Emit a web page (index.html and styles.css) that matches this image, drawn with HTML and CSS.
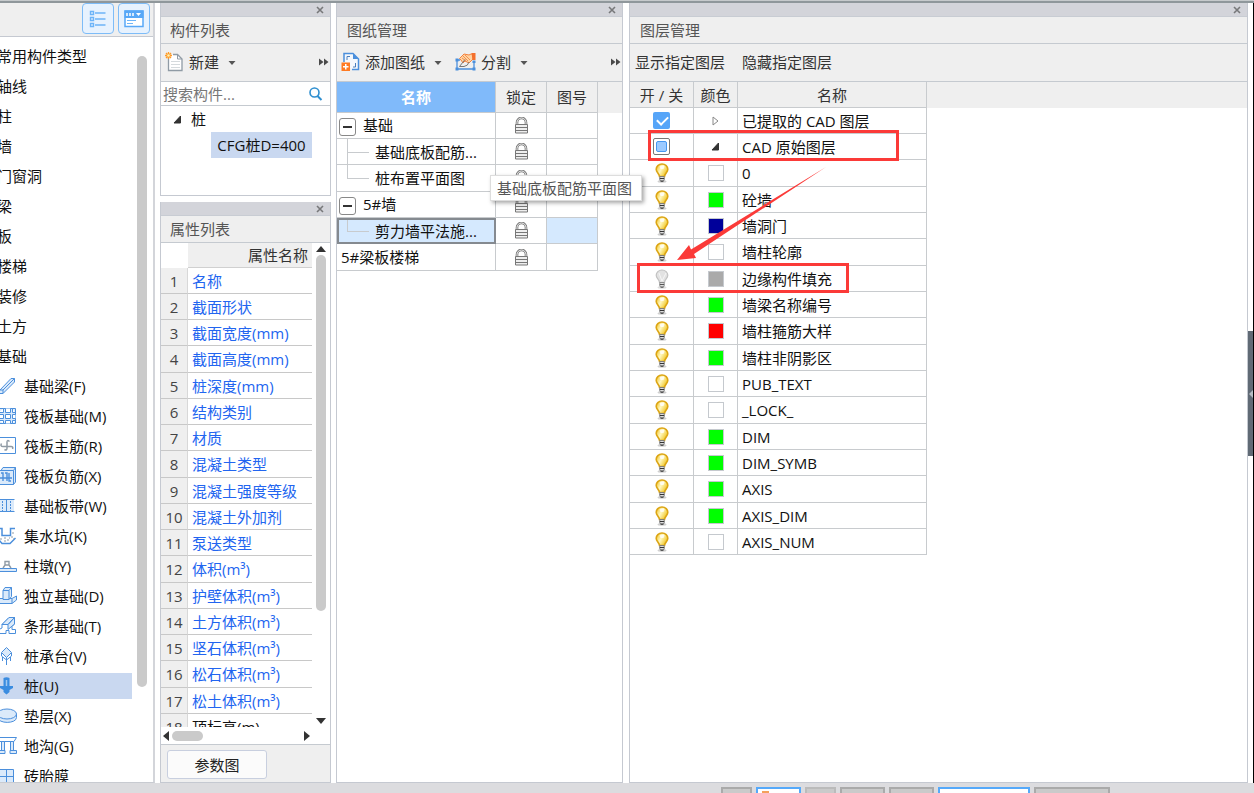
FILE: index.html
```html
<!DOCTYPE html>
<html lang="zh-CN">
<head>
<meta charset="utf-8">
<title>图层管理</title>
<link rel="stylesheet" href="styles.css">
</head>
<body>
<svg class="defs" aria-hidden="true">
  <defs>
    <linearGradient id="glow" x1="0" y1="0" x2="1" y2="0.6"><stop offset="0" stop-color="#f0bc10"/><stop offset="0.5" stop-color="#fff8c0"/><stop offset="1" stop-color="#f0c41e"/></linearGradient>
    <symbol id="bulb" viewBox="0 0 14 20">
      <ellipse cx="7" cy="18.5" rx="4.5" ry="1.2" fill="#d0d0d0"/>
      <path d="M7 1C3.6 1 1.2 3.4 1.2 6.3C1.2 9.3 4.3 10.5 4.5 13.5H9.5C9.7 10.5 12.800 9.3 12.8 6.3C12.8 3.4 10.4 1 7 1Z" fill="url(#glow)" stroke="#dca514" stroke-width="1.6"/>
      <path d="M4.5 3.500Q7 1.700 9.500 3.500L8.500 6H5.500Z" fill="#fff" opacity=".8"/>
      <path d="M4.800 13.500H9.200V17L8 18.500H6L4.800 17Z" fill="#ddd" stroke="#777" stroke-width="0.9"/>
      <path d="M4.800 15.500H9.200M5.500 18H8.500" stroke="#333"/>
    </symbol>
    <symbol id="bulb-off" viewBox="0 0 14 20">
      <ellipse cx="7" cy="18.5" rx="4.5" ry="1.2" fill="#ddd"/>
      <path d="M7 1C3.6 1 1.2 3.4 1.2 6.3C1.2 9.3 4.3 10.5 4.5 13.5H9.5C9.7 10.5 12.8 9.3 12.8 6.3C12.8 3.4 10.4 1 7 1Z" fill="#e2e2e2" stroke="#c2c2c2" stroke-width="1.2"/>
      <path d="M4 4L7 12L11 4" fill="none" stroke="#f6f6f6"/>
      <path d="M4.8 13.5H9.2V17L8 18.5H6L4.8 17Z" fill="#ddd" stroke="#888" stroke-width="0.9"/>
      <path d="M4.8 15.5H9.2M5.5 18H8.5" stroke="#555"/>
    </symbol>
    <symbol id="lock" viewBox="0 0 15 17">
      <path d="M3 8V5.5a4.500 4.500 0 0 1 9 0V8" fill="none" stroke="#777" stroke-width="2.6"/>
      <path d="M3 8V5.5a4.500 4.500 0 0 1 9 0V8" fill="none" stroke="#eee"/>
      <path d="M1.5 7.5H13.5V16H1.500Z" fill="#eee" stroke="#777"/>
      <path d="M1.5 10.500H13.5M1.500 13.500H13.500" stroke="#777"/>
    </symbol>
    <symbol id="close" viewBox="0 0 8 8"><path d="M1 1L7 7M7 1L1 7" stroke="#77787a" stroke-width="1.6"/></symbol>
    <symbol id="more" viewBox="0 0 10 8"><path d="M0 0.5L4.5 4L0 7.5ZM5 0.5L9.5 4L5 7.5Z" fill="#4a4a4a"/></symbol>
    <symbol id="caret" viewBox="0 0 8 4"><path d="M0.5 0H7.5L4 4Z" fill="#555"/></symbol>
    <symbol id="expanded" viewBox="0 0 9 9"><path d="M7.500 1V8H1Z" fill="#333" stroke="#333"/></symbol>
  </defs>
</svg>

<main class="workspace">
  <nav class="types">
    <div class="types-bar">
      <button class="view-btn" aria-label="列表视图">
        <svg width="18" height="18" viewBox="0 0 18 18" fill="none" stroke="#6db4f8" stroke-width="1.4"><path d="M1.500 1.500H4.500V4.500H1.500ZM1.500 7.500H4.500V10.500H1.500ZM1.500 13.500H4.500V16.500H1.500ZM6 3H16.500M6 9H16.500M6 15H16.500"/></svg>
      </button>
      <button class="view-btn" aria-label="窗口视图">
        <svg width="20" height="18" viewBox="0 0 20 18"><path d="M1 1H19V16.5H1Z" fill="#fff" stroke="#58a8f7" stroke-width="1.5"/><path d="M0.5 0.5H19.5V8H0.5Z" fill="#58a8f7"/><path d="M3 3V6M6 3V6M9 3V6" stroke="#fff" stroke-width="1.5"/><path d="M12 3H17L14.5 6Z" fill="#fff"/><path d="M3 10.5H12M3 13.5H9" stroke="#6db4f8" stroke-width="1.2"/></svg>
      </button>
    </div>
    <div class="types-body">
      <ul class="types-list">
        <li class="group">常用构件类型</li>
        <li class="group">轴线</li>
        <li class="group">柱</li>
        <li class="group">墙</li>
        <li class="group">门窗洞</li>
        <li class="group">梁</li>
        <li class="group">板</li>
        <li class="group">楼梯</li>
        <li class="group">装修</li>
        <li class="group">土方</li>
        <li class="group">基础</li>
        <li><svg class="type-icon" viewBox="0 0 17 18"><path d="M0 13L11 1.500H14.500V5L3 16.500H0M0 13H3V16.500M3 13L14.500 1.500" class="shape"/></svg>基础梁(F)</li>
        <li><svg class="type-icon" viewBox="0 0 17 18"><path d="M-2 1.500H15.500V16.500H-2Z" class="shape"/><path d="M-1 5.500H3.500V1.500M5.500 1.500V5.500H10.500V1.500M15 5.500H12.500V1.500M-1 7.500H3.500V11.500H-1M5.500 7.500H10.500V11.500H5.500ZM15.500 7.500H12.500V11.500H15.500M-1 13.500H3.500V16.500M5.500 16.500V13.500H10.500V16.500M12.500 16.500V13.500H15.500" class="shape plain"/></svg>筏板基础(M)</li>
        <li><svg class="type-icon" viewBox="0 0 17 18"><path d="M-2 0.500H15.500V16.500H-2Z" class="shape plain"/><path d="M9.500 4.500Q7 2.500 7 5V11Q7 14 4.500 12.500M1.500 6.500Q0 9.500 3 9.500H11Q13.500 9.500 12.500 12" class="steel" stroke-width="1.500"/></svg>筏板主筋(R)</li>
        <li><svg class="type-icon" viewBox="0 0 17 18"><path d="M-2 3.500H13.500V17.500H-2ZM1 3.500L3 0.500H15.500V15L13.500 17.500M13.500 3.500L15.500 0.500" class="shape"/><path d="M-1 11H12M1 6H3V14M5 6H7V14M9 6V14H11" class="line" stroke-width="1.400"/></svg>筏板负筋(X)</li>
        <li><svg class="type-icon" viewBox="0 0 17 18"><path d="M-2 3H14V15H-2Z" fill="#dbeafa"/><path d="M0 2.500H14.500M0 14.500H14.500M6.500 3V15" class="line"/><path d="M2.500 4V14M10.500 4V14" class="line" stroke-dasharray="2 1"/></svg>基础板带(W)</li>
        <li><svg class="type-icon" viewBox="0 0 17 18"><path d="M-1 1.500H2V8.500H10.500V1.500H15M15.500 11L10 16.500H2L-1 13" class="line" stroke-width="1.500"/><path d="M0 12H2M4 11H6M7 13H9M11 10H13M13 5V7M4 14H6M9 11H10M13 12H14" class="steel"/></svg>集水坑(K)</li>
        <li><svg class="type-icon" viewBox="0 0 17 18"><path d="M-1 11.500H16.500V14.500H-1Z" class="shape"/><path d="M3 11L5 8H9L11 11M5 8V4.500H9V8" class="steel" stroke-width="1.400"/></svg>柱墩(Y)</li>
        <li><svg class="type-icon" viewBox="0 0 17 18"><path d="M-1 11.500H12L16.500 9V13L12 16.500H-1Z" class="shape"/><path d="M3 12.500V3.500L5 0.500H11.500V9.500L9 12.500Z" class="shape"/><path d="M9 12.500V3.500L11.500 0.500M3 3.500H9M12 12V16.500" class="line"/></svg>独立基础(D)</li>
        <li><svg class="type-icon" viewBox="0 0 17 18"><path d="M-1 12.500L2 11V7.500L9 0.500H14.500V7L12 9.500V12.500H15.500V16.500H9V13.500L6 13.500V16.500H-1Z" class="shape plain"/><path d="M2 7.500L9 0.500H14.500L8 7.500ZM8 7.500L14.500 0.500V7L8 12.500Z" class="shape"/></svg>条形基础(T)</li>
        <li><svg class="type-icon" viewBox="0 0 17 18"><path d="M6.500 0.500L11.500 5.500L6.500 10.500L1.500 5.500Z" class="shape"/><path d="M1.500 6V9L6.500 13L11.500 9V6M2.500 10V14M6.500 10.500V18M10.500 10V14" class="line"/></svg>桩承台(V)</li>
        <li class="current"><svg class="type-icon" viewBox="0 0 17 18"><path d="M3.500 1Q6.500 -0.500 9.500 1V9H13V11L9.500 13V15L6.500 17.500L3.500 15V13L0 11V9H3.500Z" fill="#3a8ce0"/><path d="M6.500 3V9" stroke="#9fc8f2" stroke-width="1.500"/></svg>桩(U)</li>
        <li><svg class="type-icon" viewBox="0 0 17 18"><path d="M-2 7V10.500C-2 17 16.500 17 16.500 10.500V7Z" class="shape"/><ellipse cx="7" cy="7" rx="9.500" ry="5" class="shape"/></svg>垫层(X)</li>
        <li><svg class="type-icon" viewBox="0 0 17 18"><path d="M-1 0.500H16.500L14 4.500H-1Z" class="shape plain"/><path d="M1.500 4.500H4.500V13.500H1.500ZM10.500 4.500H13.500V13.500H10.500ZM-1 13.500H5V16.500H-1M10 13.500H16.500V16.500H10Z" class="shape"/></svg>地沟(G)</li>
        <li><svg class="type-icon" viewBox="0 0 17 18"><path d="M-2 2.500H13.500V18H-2ZM6.500 2.500V18M-2 9.500H13.500" class="shape"/></svg>砖胎膜</li>
      </ul>
      <div class="rail"><div class="thumb types-thumb"></div></div>
    </div>
  </nav>

  <div class="column">
    <section class="panel">
      <div class="strip"><button class="close" aria-label="关闭"><svg width="8" height="8"><use href="#close"/></svg></button></div>
      <h2 class="title">构件列表</h2>
      <div class="toolbar">
        <button class="tool">
          <svg width="19" height="20" viewBox="0 0 19 20"><path d="M3.500 4V18.500H17V7L12.500 2.500H8" fill="#fff" stroke="#909ba5" stroke-width="1.300"/><path d="M12.500 2.500V7H17" fill="none" stroke="#909ba5"/><path d="M6 9.500H15M6 12.500H15M6 15.500H15" stroke="#d5dadd"/><path d="M1 1L6 6M6 1L1 6M3.500 0V7M0 3.500H7" stroke="#ff9b28" stroke-width="1.300"/><circle cx="3.500" cy="3.500" r="1.300" fill="#fff3b0"/></svg>
          新建<svg class="caret" width="8" height="4"><use href="#caret"/></svg>
        </button>
        <button class="more" aria-label="更多"><svg width="10" height="8"><use href="#more"/></svg></button>
      </div>
      <label class="search">
        <input type="text" placeholder="搜索构件..." aria-label="搜索构件">
        <svg width="14" height="14" viewBox="0 0 14 14"><circle cx="5.500" cy="5.500" r="4.500" fill="none" stroke="#2f8fd0" stroke-width="1.600"/><path d="M8.500 9L12.500 13" stroke="#2f8fd0" stroke-width="2"/></svg>
      </label>
      <div class="tree">
        <div class="tree-root"><svg width="9" height="9"><use href="#expanded"/></svg>桩</div>
        <div class="tree-leaf">CFG桩D=400</div>
      </div>
    </section>

    <section class="panel grow">
      <div class="strip"><button class="close" aria-label="关闭"><svg width="8" height="8"><use href="#close"/></svg></button></div>
      <h2 class="title">属性列表</h2>
      <div class="props">
        <div class="props-clip">
          <table class="props-table">
            <thead><tr><th class="corner"></th><th>属性名称</th></tr></thead>
            <tbody>
              <tr><td>1</td><td>名称</td></tr>
              <tr><td>2</td><td>截面形状</td></tr>
              <tr><td>3</td><td>截面宽度(mm)</td></tr>
              <tr><td>4</td><td>截面高度(mm)</td></tr>
              <tr><td>5</td><td>桩深度(mm)</td></tr>
              <tr><td>6</td><td>结构类别</td></tr>
              <tr><td>7</td><td>材质</td></tr>
              <tr><td>8</td><td>混凝土类型</td></tr>
              <tr><td>9</td><td>混凝土强度等级</td></tr>
              <tr><td>10</td><td>混凝土外加剂</td></tr>
              <tr><td>11</td><td>泵送类型</td></tr>
              <tr><td>12</td><td>体积(m³)</td></tr>
              <tr><td>13</td><td>护壁体积(m³)</td></tr>
              <tr><td>14</td><td>土方体积(m³)</td></tr>
              <tr><td>15</td><td>坚石体积(m³)</td></tr>
              <tr><td>16</td><td>松石体积(m³)</td></tr>
              <tr><td>17</td><td>松土体积(m³)</td></tr>
              <tr><td>18</td><td class="own">顶标高(m)</td></tr>
            </tbody>
          </table>
        </div>
        <div class="v-scroll">
          <svg width="10" height="6" viewBox="0 0 10 6"><path d="M0 6L5 0L10 6Z" fill="#333"/></svg>
          <div class="thumb props-thumb"></div>
          <svg class="down" width="10" height="6" viewBox="0 0 10 6"><path d="M0 0H10L5 6Z" fill="#333"/></svg>
        </div>
      </div>
      <div class="h-scroll">
        <svg width="6" height="10" viewBox="0 0 6 10"><path d="M6 0V10L0 5Z" fill="#333"/></svg>
        <div class="thumb h-thumb"></div>
        <svg class="right" width="6" height="10" viewBox="0 0 6 10"><path d="M0 0L6 5L0 10Z" fill="#333"/></svg>
      </div>
      <div class="actions"><button class="param">参数图</button></div>
    </section>
  </div>

  <section class="panel drawings">
    <div class="strip"><button class="close" aria-label="关闭"><svg width="8" height="8"><use href="#close"/></svg></button></div>
    <h2 class="title">图纸管理</h2>
    <div class="toolbar">
      <button class="tool">
        <svg width="19" height="20" viewBox="0 0 19 20"><path d="M3 10V1.500H12L17.500 7V17.500H11" fill="#f4f8fd" stroke="#4b8fdc" stroke-width="1.500"/><path d="M12 1.500V7H17.500Z" fill="#4b8fdc"/><path d="M6 8V4.500H9M14.500 11V15H12" fill="none" stroke="#4b7ebc"/><path d="M0.500 10.500H9V19H0.500Z" fill="#ff7a22"/><path d="M4.750 12V17.500M2 14.750H7.500" stroke="#fff" stroke-width="1.500"/></svg>
        添加图纸<svg class="caret" width="8" height="4"><use href="#caret"/></svg>
      </button>
      <button class="tool">
        <svg width="21" height="20" viewBox="0 0 21 20"><path d="M2 8V17H19V10M2 8H5" fill="none" stroke="#4b8fdc" stroke-width="1.300"/><path d="M0.500 6.500H3.500V9.500H0.500ZM0.500 15.500H3.500V18.500H0.500ZM17.500 15.500H20.500V18.500H17.500ZM17.500 8.500H20.500V11H17.500Z" fill="#4b8fdc"/><path d="M4.500 6.500L9 2L14 3L16 2H18V7L14 11L10 9L8 11L6 8Z" fill="#ffd3a2" stroke="#f4803c"/><path d="M16.500 1H20.500V8H17.500Z" fill="#f4702d"/><path d="M8 4L13 9M10 3L15 8M7 6L11 9" stroke="#f09050"/><path d="M4.500 14.500L10 7.500M4.500 14.500H9Q13 14 14 10" fill="none" stroke="#777"/></svg>
        分割<svg class="caret" width="8" height="4"><use href="#caret"/></svg>
      </button>
      <button class="more" aria-label="更多"><svg width="10" height="8"><use href="#more"/></svg></button>
    </div>
    <div class="table-area">
      <table class="grid drawings-table">
        <thead><tr><th class="sorted">名称</th><th>锁定</th><th>图号</th></tr></thead>
        <tbody>
          <tr><td class="parent"><button class="toggle" aria-label="折叠"></button>基础</td><td><svg class="lock"><use href="#lock"/></svg></td><td></td></tr>
          <tr><td class="child">基础底板配筋...</td><td><svg class="lock"><use href="#lock"/></svg></td><td></td></tr>
          <tr><td class="child last">桩布置平面图</td><td><svg class="lock"><use href="#lock"/></svg></td><td></td></tr>
          <tr><td class="parent"><button class="toggle" aria-label="折叠"></button>5#墙</td><td><svg class="lock"><use href="#lock"/></svg></td><td></td></tr>
          <tr class="selected"><td class="child last">剪力墙平法施...</td><td><svg class="lock"><use href="#lock"/></svg></td><td></td></tr>
          <tr><td>5#梁板楼梯</td><td><svg class="lock"><use href="#lock"/></svg></td><td></td></tr>
        </tbody>
      </table>
      <div class="head-fill tall"></div>
    </div>
    <div class="tooltip" role="tooltip">基础底板配筋平面图</div>
  </section>

  <section class="panel layers">
    <div class="strip"><button class="close" aria-label="关闭"><svg width="8" height="8"><use href="#close"/></svg></button></div>
    <h2 class="title">图层管理</h2>
    <div class="toolbar wide">
      <button class="tool">显示指定图层</button>
      <button class="tool">隐藏指定图层</button>
    </div>
    <div class="table-area">
      <table class="grid layers-table">
        <thead><tr><th>开 / 关</th><th>颜色</th><th>名称</th></tr></thead>
        <tbody>
          <tr><td><input type="checkbox" class="check" aria-label="已提取的 CAD 图层" checked></td><td><svg width="7" height="10" viewBox="0 0 7 10"><path d="M1 1L6 5L1 9Z" fill="#fff" stroke="#888"/></svg></td><td>已提取的 CAD 图层</td></tr>
          <tr><td><input type="checkbox" class="check partial" aria-label="CAD 原始图层"></td><td><svg width="9" height="9"><use href="#expanded"/></svg></td><td>CAD 原始图层</td></tr>
          <tr><td><svg class="bulb"><use href="#bulb"/></svg></td><td><i class="swatch"></i></td><td>0</td></tr>
          <tr><td><svg class="bulb"><use href="#bulb"/></svg></td><td><i class="swatch green"></i></td><td>砼墙</td></tr>
          <tr><td><svg class="bulb"><use href="#bulb"/></svg></td><td><i class="swatch navy"></i></td><td>墙洞门</td></tr>
          <tr><td><svg class="bulb"><use href="#bulb"/></svg></td><td><i class="swatch"></i></td><td>墙柱轮廓</td></tr>
          <tr><td><svg class="bulb"><use href="#bulb-off"/></svg></td><td><i class="swatch gray"></i></td><td>边缘构件填充</td></tr>
          <tr><td><svg class="bulb"><use href="#bulb"/></svg></td><td><i class="swatch green"></i></td><td>墙梁名称编号</td></tr>
          <tr><td><svg class="bulb"><use href="#bulb"/></svg></td><td><i class="swatch red"></i></td><td>墙柱箍筋大样</td></tr>
          <tr><td><svg class="bulb"><use href="#bulb"/></svg></td><td><i class="swatch green"></i></td><td>墙柱非阴影区</td></tr>
          <tr><td><svg class="bulb"><use href="#bulb"/></svg></td><td><i class="swatch"></i></td><td>PUB_TEXT</td></tr>
          <tr><td><svg class="bulb"><use href="#bulb"/></svg></td><td><i class="swatch"></i></td><td>_LOCK_</td></tr>
          <tr><td><svg class="bulb"><use href="#bulb"/></svg></td><td><i class="swatch green"></i></td><td>DIM</td></tr>
          <tr><td><svg class="bulb"><use href="#bulb"/></svg></td><td><i class="swatch green"></i></td><td>DIM_SYMB</td></tr>
          <tr><td><svg class="bulb"><use href="#bulb"/></svg></td><td><i class="swatch green"></i></td><td>AXIS</td></tr>
          <tr><td><svg class="bulb"><use href="#bulb"/></svg></td><td><i class="swatch green"></i></td><td>AXIS_DIM</td></tr>
          <tr><td><svg class="bulb"><use href="#bulb"/></svg></td><td><i class="swatch"></i></td><td>AXIS_NUM</td></tr>
        </tbody>
      </table>
      <div class="head-fill"></div>
    </div>
    <svg class="marks" width="290" height="300" viewBox="0 0 290 300" aria-hidden="true">
      <path d="M19.500 128.500H267.500V156.500H19.500ZM8.500 261.500H217.500V288.500H8.500Z" fill="none" stroke="#fb3a38" stroke-width="3"/>
      <path d="M196 164L64 251L66 255L47 257L59 242L61 246.500Z" fill="#fb3a38"/>
    </svg>
  </section>

  <div class="edge"><button class="drawer" aria-label="展开"><svg width="4" height="8" viewBox="0 0 4 8"><path d="M4 0V8L0 4Z" fill="#b5bcc3"/></svg></button></div>
</main>

<footer class="status">
  <span class="chip w31"></span>
  <span class="chip on w45"><i></i></span>
  <span class="chip faint w31"></span>
  <span class="chip w45"></span>
  <span class="chip w45"></span>
  <span class="chip on w92"></span>
  <span class="chip w76"></span>
</footer>
</body>
</html>
```
FILE: styles.css
```css
* { box-sizing: border-box; }

body {
  margin: 0;
  height: 100vh;
  display: flex;
  flex-direction: column;
  overflow: hidden;
  border-top: 1px solid #c6cacc;
  background: #fff;
  color: #111;
  font: 15px/20px "Open Sans", "Noto Sans CJK SC", sans-serif;
}

button, input {
  margin: 0;
  padding: 0;
  border: 0;
  background: none;
  color: inherit;
  font: inherit;
}

svg { display: block; flex: none; }
.defs { position: absolute; width: 0; height: 0; }

.workspace {
  flex: 1;
  min-height: 0;
  display: flex;
  border-top: 2px solid #8f979b;
}

/* component type navigation */
.types {
  width: 155px;
  display: flex;
  flex-direction: column;
  border-right: 2px solid #d3d5da;
  border-bottom: 1px solid #c8cbd1;
}
.types-bar {
  flex: none;
  height: 34px;
  display: flex;
  justify-content: flex-end;
  gap: 4px;
  padding-right: 3px;
  background: #efefef;
  border-bottom: 1px solid #c5c9d1;
}
.view-btn {
  width: 32px;
  height: 31px;
  display: flex;
  align-items: center;
  justify-content: center;
  border: 1px solid #7dbcf8;
  border-radius: 4px;
  background: #e7f2fe;
}
.types-body {
  flex: 1;
  min-height: 0;
  display: flex;
  overflow: hidden;
}
.types-list {
  flex: 1;
  margin: 0;
  padding: 6px 0 0;
  list-style: none;
}
.types-list li {
  height: 26px;
  margin: 0 0 4px;
  display: flex;
  align-items: center;
  gap: 7px;
}
.types-list .group { margin-left: -3px; }
.types-list .current { background: #c9d8f0; }
.type-icon { width: 17px; height: 18px; }
.shape { fill: #dbeafa; stroke: #4b8fdc; }
.plain { fill: #fff; }
.line { fill: none; stroke: #4b8fdc; }
.steel { fill: none; stroke: #909ba5; }
.rail { width: 21px; padding: 19px 6px 0 5px; }
.thumb { background: #cacaca; border-radius: 5px; }
.types-thumb { height: 631px; }

/* docked panels */
.column {
  width: 171px;
  margin: 0 5px;
  display: flex;
  flex-direction: column;
  gap: 6px;
}
.panel {
  position: relative;
  display: flex;
  flex-direction: column;
  border: 1px solid #c5c9d1;
  border-top: 0;
  background: #fff;
}
.grow { flex: 1; min-height: 0; }
.strip {
  flex: none;
  height: 14px;
  display: flex;
  justify-content: flex-end;
  align-items: center;
  padding-right: 6px;
  background: #d3d4da;
  border-bottom: 1px solid #c8ccd3;
}
.title {
  flex: none;
  height: 27px;
  margin: 0;
  padding: 3px 9px;
  background: #efefef;
  border-bottom: 1px solid #c5cad0;
  color: #555;
  font-size: 15px;
  font-weight: 400;
}
.toolbar {
  flex: none;
  height: 38px;
  display: flex;
  align-items: center;
  gap: 13px;
  padding: 0 1px 2px 4px;
  background: #efefef;
  border-bottom: 1px solid #c5cad0;
}
.toolbar.wide { gap: 17px; padding-left: 5px; }
.tool {
  display: flex;
  align-items: center;
  gap: 5px;
  color: #333;
  white-space: nowrap;
}
.caret { margin: 2px 0 0 4px; }
.more { margin-left: auto; }

.search {
  height: 24px;
  display: flex;
  align-items: center;
  padding: 0 7px 0 2px;
  border-bottom: 1px solid #c5cad0;
}
.search input { flex: 1; min-width: 0; }
.search input::placeholder { color: #777; opacity: 1; }

.tree { height: 89px; padding-top: 3px; }
.tree-root {
  display: flex;
  align-items: center;
  gap: 9px;
  padding-left: 12px;
}
.tree-leaf {
  width: 101px;
  margin: 3px 0 0 50px;
  padding: 3px 0;
  background: #c9d8f0;
  text-align: center;
}

/* property list */
.props { flex: 1; min-height: 0; display: flex; }
.props-clip { width: 151px; overflow: hidden; }
.props-table { width: 100%; border-collapse: separate; border-spacing: 0; }
.props-table th {
  height: 25px;
  padding: 0 4px 0 0;
  background: #efefef;
  border-bottom: 1px solid #d0d0d0;
  color: #333;
  font-weight: 400;
  text-align: right;
}
.props-table .corner { width: 27px; background: #fff; border: 0; }
.props-table td {
  height: 26px;
  padding: 0 0 0 4px;
  border-bottom: 1px solid #c8c8c8;
  color: #2265f0;
  white-space: nowrap;
}
.props-table tr:nth-child(4n) td { height: 27px; }
.props-table td:first-child {
  padding: 0;
  background: #efefef;
  border-right: 1px solid #d8d8d8;
  color: #444;
  text-align: center;
}
.props-table td.own { color: #111; }
.v-scroll {
  width: 18px;
  display: flex;
  flex-direction: column;
  align-items: center;
  padding: 3px 0 3px;
}
.props-thumb { width: 10px; height: 356px; margin-top: 3px; }
.down { margin-top: auto; }
.h-scroll {
  flex: none;
  height: 18px;
  display: flex;
  align-items: center;
  padding: 0 20px 0 2px;
  gap: 3px;
  border-bottom: 1px solid #c5cad0;
}
.h-thumb { width: 31px; height: 10px; }
.right { margin-left: auto; }
.actions {
  flex: none;
  height: 37px;
  padding: 5px 6px 3px;
  background: #efefef;
}
.param {
  width: 100px;
  height: 29px;
  border: 1px solid #c8cfdf;
  border-radius: 3px;
  background: #fbfbfb;
  color: #222;
}

/* table panels */
.table-area { flex: 1; min-height: 0; display: flex; align-items: flex-start; }
.head-fill { flex: 1; height: 26px; background: #efefef; }
.head-fill.tall { height: 31px; }
.grid { flex: none; table-layout: fixed; border-collapse: separate; border-spacing: 0; }
.grid th, .grid td {
  padding: 0;
  border-right: 1px solid #c8cbce;
  border-bottom: 1px solid #c8cbce;
  white-space: nowrap;
}
.grid th { background: #efefef; color: #333; font-weight: 400; }
.grid td { height: 26px; text-align: center; }
.grid tr:nth-child(3n) td { height: 27px; }
.grid td svg { margin: auto; }

.drawings { width: 287px; z-index: 2; }
.drawings .title { padding-left: 10px; }
.drawings-table { width: 261px; }
.drawings-table th { width: 51px; height: 31px; }
.drawings-table th:first-child { width: 159px; }
.drawings-table .sorted { background: #80bafa; color: #fff; font-weight: 700; }
.drawings-table td:first-child { padding-left: 4px; text-align: left; }
.drawings-table td.parent { padding-left: 2px; }
.drawings-table td.child {
  padding-left: 38px;
  background:
    linear-gradient(#c8cbce, #c8cbce) 10px 0 / 1px 100% no-repeat,
    linear-gradient(#c8cbce, #c8cbce) 10px 13px / 22px 1px no-repeat;
}
.drawings-table td.last {
  background:
    linear-gradient(#c8cbce, #c8cbce) 10px 0 / 1px 13px no-repeat,
    linear-gradient(#c8cbce, #c8cbce) 10px 13px / 22px 1px no-repeat;
}
.drawings-table .selected td:first-child { background-color: #d5e9fe; outline: 2px solid #858a90; outline-offset: -2px; }
.drawings-table .selected td:last-child { background: #d5e9fe; }
.toggle {
  width: 17px;
  height: 18px;
  margin-right: 7px;
  border: 1px solid #888;
  border-radius: 3px;
  background: linear-gradient(#333, #333) center / 9px 2px no-repeat #fff;
  vertical-align: middle;
}
.lock { width: 15px; height: 17px; }
.tooltip {
  position: absolute;
  left: 153px;
  top: 172px;
  padding: 2px 9px 2px 6px;
  border: 1px solid #ddd;
  background: #fff;
  box-shadow: 2px 2px 4px rgb(0 0 0 / 35%);
  color: #555;
  white-space: nowrap;
}

.layers { flex: 1; margin-left: 6px; }
.layers .title { padding-left: 10px; }
.layers-table { width: 297px; }
.layers-table th { width: 64px; height: 26px; }
.layers-table th:nth-child(2) { width: 44px; }
.layers-table th:last-child { width: 189px; }
.layers-table td:last-child { padding-left: 4px; text-align: left; }
.check {
  appearance: none;
  display: block;
  width: 17px;
  height: 17px;
  margin: auto;
  border-radius: 2px;
}
.check:checked { background: #56a5f8; }
.check:checked::after {
  content: "";
  display: block;
  width: 5px;
  height: 9px;
  margin: 2px 0 0 6px;
  border: solid #fff;
  border-width: 0 2px 2px 0;
  transform: rotate(45deg);
}
.check.partial {
  display: flex;
  border: 1px solid #777;
  background: #fff;
  padding: 2px;
}
.check.partial::after {
  content: "";
  flex: 1;
  border: 1px solid #4798f0;
  border-radius: 2px;
  background: #9ccaff;
}
.bulb { width: 14px; height: 20px; }
.swatch {
  display: block;
  width: 16px;
  height: 16px;
  margin: auto;
  border: 1px solid #c5c9ce;
  background: #fff;
}
.swatch.green { background: #0f0; }
.swatch.navy { background: #00009a; }
.swatch.gray { background: #aaa; }
.swatch.red { background: #f00; }

.marks { position: absolute; left: 0; top: 0; }

.edge {
  flex: none;
  width: 6px;
  display: flex;
  align-items: flex-start;
  border-right: 1px solid #000;
}
.drawer {
  width: 5px;
  height: 125px;
  margin-top: 328px;
  display: flex;
  align-items: center;
  justify-content: flex-end;
  background: #606a75;
}

/* status bar */
.status {
  flex: none;
  height: 10px;
  display: flex;
  gap: 4px;
  padding: 4px 0 0 721px;
  background: #dcdcdf;
}
.chip { border: 2px solid #aaa; border-bottom: 0; background: #cacaca; }
.chip.on { border-color: #55a9fa; background: #fff; }
.chip.faint { border-color: #bbb; }
.chip i { display: block; width: 7px; height: 2px; margin: 2px 0 0 4px; background: #f5a05c; }
.w31 { width: 31px; }
.w45 { width: 45px; }
.w92 { width: 92px; }
.w76 { width: 76px; }
```
